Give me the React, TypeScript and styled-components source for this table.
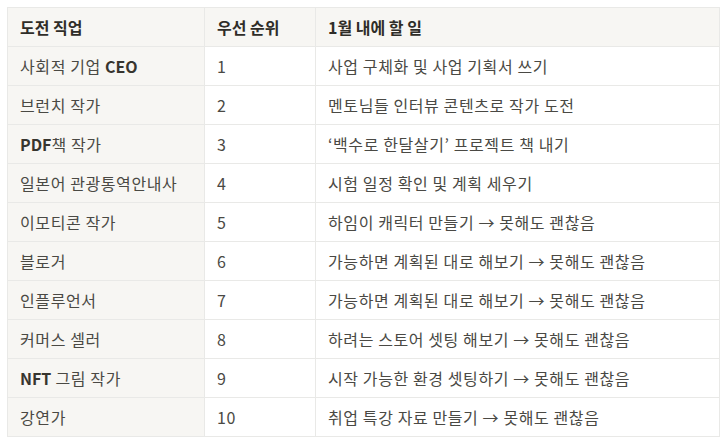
import { FunctionComponent } from 'react';
import styled, { createGlobalStyle } from 'styled-components';

const GlobalStyle = createGlobalStyle`
  body {
    margin: 0;
    background: #fff;
    font-family: "Noto Sans CJK KR", "Noto Sans", sans-serif;
    color: #37352f;
  }
`;

const Wrapper = styled.div`
  padding: 7px 0 0 7px;
`;

const Table = styled.table`
  border-collapse: collapse;
  table-layout: fixed;
  width: 713px;
  font-size: 16px;
`;

const Cell = styled.td<{ $head?: boolean; $shade?: boolean }>`
  height: 38px;
  padding: 0 12px;
  border: 1px solid #e9e9e7;
  background: ${(p) => (p.$head || p.$shade ? '#f7f6f3' : '#ffffff')};
  font-weight: ${(p) => (p.$head ? 700 : 400)};
  color: ${(p) => (p.$head ? '#2f2d28' : '#4a4944')};
  letter-spacing: ${(p) => (p.$head ? '0' : '0.6px')};
  white-space: nowrap;
  text-align: left;
  vertical-align: middle;
`;

const Latin = styled.span`
  font-weight: 600;
  letter-spacing: 0;
  color: #37352f;
`;

const rows: [string, string, string, string][] = [
  ['사회적 기업 ', 'CEO', '1', '사업 구체화 및 사업 기획서 쓰기'],
  ['브런치 작가', '', '2', '멘토님들 인터뷰 콘텐츠로 작가 도전'],
  ['', 'PDF', '3', '‘백수로 한달살기’ 프로젝트 책 내기'],
  ['일본어 관광통역안내사', '', '4', '시험 일정 확인 및 계획 세우기'],
  ['이모티콘 작가', '', '5', '하임이 캐릭터 만들기 → 못해도 괜찮음'],
  ['블로거', '', '6', '가능하면 계획된 대로 해보기 → 못해도 괜찮음'],
  ['인플루언서', '', '7', '가능하면 계획된 대로 해보기 → 못해도 괜찮음'],
  ['커머스 셀러', '', '8', '하려는 스토어 셋팅 해보기 → 못해도 괜찮음'],
  ['', 'NFT', '9', '시작 가능한 환경 셋팅하기 → 못해도 괜찮음'],
  ['강연가', '', '10', '취업 특강 자료 만들기 → 못해도 괜찮음'],
];

const tails: Record<string, string> = {
  PDF: '책 작가',
  NFT: ' 그림 작가',
};

const App: FunctionComponent = () => {
  return (
    <Wrapper>
      <GlobalStyle />
      <Table>
        <colgroup>
          <col style={{ width: '197px' }} />
          <col style={{ width: '111px' }} />
          <col />
        </colgroup>
        <thead>
          <tr>
            <Cell as="th" $head>도전 직업</Cell>
            <Cell as="th" $head>우선 순위</Cell>
            <Cell as="th" $head>1월 내에 할 일</Cell>
          </tr>
        </thead>
        <tbody>
          {rows.map((r) => (
            <tr key={r[2]}>
              <Cell $shade>
                {r[0]}
                {r[1] && <Latin>{r[1]}</Latin>}
                {r[1] && tails[r[1]]}
              </Cell>
              <Cell>{r[2]}</Cell>
              <Cell>{r[3]}</Cell>
            </tr>
          ))}
        </tbody>
      </Table>
    </Wrapper>
  );
};

export default App;
